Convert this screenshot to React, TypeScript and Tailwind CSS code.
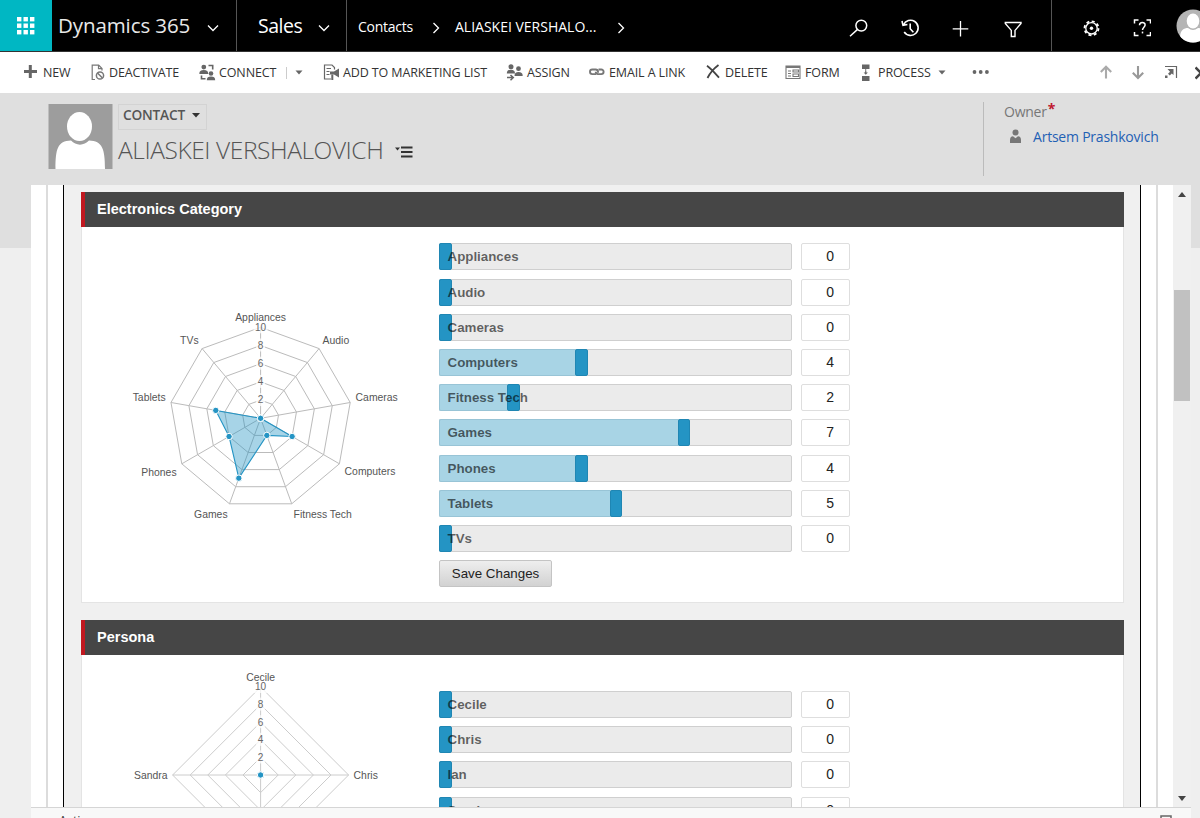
import type { ReactNode } from 'react';

type Entry = { name: string; value: number };
type Label = { text: string; x: number; y: number; anchor: 'start' | 'middle' | 'end' };

const electronics: Entry[] = [
  { name: 'Appliances', value: 0 },
  { name: 'Audio', value: 0 },
  { name: 'Cameras', value: 0 },
  { name: 'Computers', value: 4 },
  { name: 'Fitness Tech', value: 2 },
  { name: 'Games', value: 7 },
  { name: 'Phones', value: 4 },
  { name: 'Tablets', value: 5 },
  { name: 'TVs', value: 0 },
];

// label offsets are relative to the chart centre
const electronicsLabels: Label[] = [
  { text: 'Appliances', x: 0, y: -97, anchor: 'middle' },
  { text: 'Audio', x: 62, y: -74, anchor: 'start' },
  { text: 'Cameras', x: 95, y: -17, anchor: 'start' },
  { text: 'Computers', x: 84, y: 57, anchor: 'start' },
  { text: 'Fitness Tech', x: 33, y: 99.5, anchor: 'start' },
  { text: 'Games', x: -33, y: 99.5, anchor: 'end' },
  { text: 'Phones', x: -84, y: 58, anchor: 'end' },
  { text: 'Tablets', x: -95, y: -17, anchor: 'end' },
  { text: 'TVs', x: -62, y: -74, anchor: 'end' },
];

const persona: Entry[] = [
  { name: 'Cecile', value: 0 },
  { name: 'Chris', value: 0 },
  { name: 'Ian', value: 0 },
  { name: 'Sandra', value: 0 },
];

const personaLabels: Label[] = [
  { text: 'Cecile', x: 0, y: -94, anchor: 'middle' },
  { text: 'Chris', x: 93, y: 4, anchor: 'start' },
  { text: 'Sandra', x: -93, y: 4, anchor: 'end' },
];

const STEPS = [2, 4, 6, 8, 10];

type RadarProps = {
  data: Entry[];
  labels: Label[];
  radius: number;
  cy: number;
  line: string;
};

function Radar({ data, labels, radius, cy, line }: RadarProps) {
  const cx = 178.6;
  const point = (i: number, value: number) => {
    const angle = (Math.PI * 2 * i) / data.length;
    const r = (radius * value) / 10;
    return [cx + Math.sin(angle) * r, cy - Math.cos(angle) * r];
  };
  const ring = (value: number) => data.map((_, i) => point(i, value).join(',')).join(' ');

  return (
    <svg width="357" height="374" className="shrink-0 font-['Liberation_Sans',sans-serif]">
      <g fill="none" stroke={line} strokeWidth="1">
        {STEPS.map((s) => (
          <polygon key={s} points={ring(s)} />
        ))}
        {data.map((d, i) => {
          const [x, y] = point(i, 10);
          return <line key={d.name} x1={cx} y1={cy} x2={x} y2={y} />;
        })}
      </g>
      {STEPS.map((s) => {
        const y = cy - (radius * s) / 10;
        const w = s === 10 ? 14 : 9;
        return (
          <g key={s}>
            <rect x={cx - w / 2} y={y - 7} width={w} height="13" fill="#fff" fillOpacity="0.75" />
            <text x={cx} y={y + 3.3} textAnchor="middle" fontSize="10" fill="#666">
              {s}
            </text>
          </g>
        );
      })}
      {labels.map((l) => (
        <text
          key={l.text}
          x={cx + l.x}
          y={cy + l.y}
          textAnchor={l.anchor}
          fontSize="10.4"
          fill="#555"
        >
          {l.text}
        </text>
      ))}
      <polygon
        points={data.map((d, i) => point(i, d.value).join(',')).join(' ')}
        fill="#2494c4"
        fillOpacity="0.4"
        stroke="#2494c4"
        strokeWidth="1.1"
      />
      {data.map((d, i) => {
        const [x, y] = point(i, d.value);
        return <circle key={d.name} cx={x} cy={y} r="3.2" fill="#2494c4" stroke="#fff" strokeWidth="1" />;
      })}
    </svg>
  );
}

function SliderRow({ name, value }: Entry) {
  const offset = (value / 10) * 341;
  return (
    <div className="flex h-[27px] gap-[9px]">
      <div className="relative w-[353px] rounded-xs border border-[#cfcfcf] bg-[#ebebeb]">
        <div
          className="absolute -top-px -bottom-px -left-px rounded-l-xs border border-r-0 border-[#98c4d6] bg-[#a8d4e5]"
          style={{ width: offset + 2 }}
        />
        <div
          className="absolute -top-px -bottom-px w-[12.5px] rounded-xs border border-[#1f86b3] bg-[#2494c4]"
          style={{ left: offset - 1 }}
        />
        <span className="absolute top-0 left-[7.5px] text-[13.33px] leading-[25px] font-bold text-black/60">
          {name}
        </span>
      </div>
      <div className="w-[49px] rounded-xs border border-[#dedede] bg-white pr-[15px] text-right text-sm leading-[25px] text-[#222]">
        {value}
      </div>
    </div>
  );
}

function Section({ title, children }: { title: string; children: ReactNode }) {
  return (
    <section className="font-['Liberation_Sans',Arial,sans-serif]">
      <h2 className="h-[35px] border-l-4 border-[#c01820] bg-[#464646] pl-3 text-[14.5px] leading-[34px] font-bold text-white">
        {title}
      </h2>
      <div className="flex h-[376px] border border-t-0 border-[#e4e4e4] bg-white">{children}</div>
    </section>
  );
}

function Chevron({ className }: { className: string }) {
  return (
    <svg viewBox="0 0 12 12" className={className} fill="none" stroke="#fff" strokeWidth="1.3">
      <path d="M1 3.5l5 5 5-5" />
    </svg>
  );
}

function TopBar() {
  return (
    <header className="flex h-[52px] shrink-0 overflow-hidden border-b border-[#333] bg-black text-white">
      <div className="flex h-[52px] w-[52px] shrink-0 items-center justify-center bg-[#00b7c3]">
        <svg width="18" height="18" fill="#fff">
          {[0, 6.5, 13].map((y) =>
            [0, 6.5, 13].map((x) => <rect key={`${x}-${y}`} x={x} y={y} width="4.4" height="4.4" />),
          )}
        </svg>
      </div>
      <div className="flex w-[185px] shrink-0 border-r border-[#555] pl-1.5">
        <span className="w-[149px] text-[20.5px] leading-[51px] tracking-[-0.1px] text-[#e8e8e8]">
          Dynamics 365
        </span>
        <Chevron className="mt-[22px] h-3 w-3" />
      </div>
      <div className="flex w-[110px] shrink-0 border-r border-[#555] pl-[21px]">
        <span className="w-[60px] text-[19.5px] leading-[51px] tracking-[-0.5px]">Sales</span>
        <Chevron className="mt-[22px] h-3 w-3" />
      </div>
      <div className="flex flex-1 pl-[11px] text-[14px] leading-[54px]">
        <span className="w-[72px] tracking-[-0.25px]">Contacts</span>
        <Chevron className="mt-[22px] h-3 w-3 -rotate-90" />
        <span className="ml-[13px] w-[160px] tracking-[0px]">ALIASKEI VERSHALO...</span>
        <Chevron className="mt-[22px] h-3 w-3 -rotate-90" />
      </div>
      <div className="flex shrink-0 gap-[30px] pr-[27px]">
        <svg width="22" height="51" fill="none" stroke="#fff" strokeWidth="1.5">
          <circle cx="13.3" cy="25.6" r="5.4" />
          <path d="M9.3 29.6L2 36.3" />
        </svg>
        <svg width="22" height="51" fill="none" stroke="#fff" strokeWidth="1.6">
          <path d="M3.5 25A7.6 7.6 0 1 1 4.2 32M2 21l1 4.4 4.4-.9M10.2 23.5v5.3l3.2 3.4" />
        </svg>
        <svg width="20" height="51" fill="none" stroke="#fff" strokeWidth="1.3">
          <path d="M8.500 21v15.5M0.700 28.8h15.6" />
        </svg>
        <svg width="22" height="51" fill="none" stroke="#fff" strokeWidth="1.4">
          <path d="M3.300 22.500h15.700v1l-6 6.900v6.100H9.300v-6.100l-6-6.900z" />
        </svg>
      </div>
      <div className="flex w-[149px] shrink-0 border-l border-[#555] pl-[31px]">
        <svg width="18" height="51" fill="none" stroke="#fff" className="shrink-0">
          <circle cx="8.5" cy="28.3" r="7" strokeWidth="1.800" strokeDasharray="3 2.498" />
          <circle cx="8.5" cy="28.3" r="5.700" strokeWidth="1.300" />
          <circle cx="8.5" cy="28.3" r="1.7" fill="#fff" stroke="none" />
        </svg>
        <svg width="18" height="51" fill="none" stroke="#fff" strokeWidth="1.5" className="ml-8 shrink-0">
          <path d="M1.500 23.500v-3.500h4M13.500 20h4v3.500M17.500 32v3.500h-4M5.500 35.500h-4V32" />
          <path d="M6.500 25.300c0-3.800 5.800-3.600 5.600-.2 0 2.200-2.600 2.200-2.600 5" />
          <path d="M9.500 31.600v1.800" />
        </svg>
        <svg width="34" height="51" className="ml-[25px] shrink-0">
          <clipPath id="face">
            <circle cx="17" cy="26" r="16.5" />
          </clipPath>
          <g clipPath="url(#face)">
            <rect width="34" height="51" fill="#b5b5b5" />
            <ellipse cx="17" cy="21" rx="6.3" ry="7.5" fill="#fff" />
            <path d="M4 43v-5c0-8 4-10 8-10q5 4 10 0c5 0 8 3 8 10v5z" fill="#fff" />
          </g>
        </svg>
      </div>
    </header>
  );
}

function Caret() {
  return (
    <svg width="8" height="5" fill="#666">
      <path d="M0.5 0.5h7L4 4.5z" />
    </svg>
  );
}

function Command({ className, label, children }: { className: string; label: string; children: ReactNode }) {
  return (
    <div className={`flex shrink-0 items-center ${className}`}>
      {children}
      <span className="mt-px whitespace-nowrap">{label}</span>
    </div>
  );
}

function CommandBar() {
  return (
    <nav className="flex h-[41px] shrink-0 items-center bg-white pl-[23px] text-[12.5px] tracking-[-0.12px] text-[#333]">
      <Command className="w-[67px]" label="NEW">
        <svg width="20" height="18" fill="none" stroke="#666" strokeWidth="3">
          <path d="M7.3 1v13M1 7.500h13" />
        </svg>
      </Command>
      <Command className="w-[109px]" label="DEACTIVATE">
        <svg width="19" height="18" fill="none" stroke="#777" strokeWidth="1.2">
          <path d="M5 15.500H2.200V1.200h6.5l3.3 3.300v2M8.500 1.200v3.500H12" />
          <circle cx="10" cy="11.500" r="3.6" strokeWidth="1.5" />
          <path d="M7.500 9l5 5" strokeWidth="1.5" />
        </svg>
      </Command>
      <Command className="w-[87px]" label="CONNECT">
        <svg width="20" height="18" fill="#666">
          <circle cx="4.8" cy="3.1" r="2.4" />
          <path d="M0.3 10c0-3 1.5-4 4.5-4s4.4 1 4.4 4z" />
          <circle cx="12" cy="9.500" r="2.3" />
          <path d="M7.8 16.2c0-3 1.5-3.8 4.2-3.8s4.2.8 4.2 3.8z" />
          <path d="M9.5 1.500h4.2v4M2.5 11.500v3.2h4" fill="none" stroke="#666" strokeWidth="1.6" />
        </svg>
      </Command>
      <div className="flex h-3 w-[37px] shrink-0 items-center border-l border-[#ccc] pl-2">
        <Caret />
      </div>
      <Command className="w-[183px]" label="ADD TO MARKETING LIST">
        <svg width="20" height="18" fill="none" stroke="#666" strokeWidth="1.2">
          <path d="M8 15H1.500v-14H9l2.5 2.5v2M3.5 4.500h4.5M3.5 7.500h3M3.5 10.500h3" />
          <path d="M7 7.500h4l5-3v9l-5-3H7z" fill="#666" stroke="none" />
          <path d="M9.3 10.500v5.500" strokeWidth="2" />
        </svg>
      </Command>
      <Command className="w-[83px]" label="ASSIGN">
        <svg width="21" height="18" fill="#666">
          <circle cx="5" cy="2.700" r="2.5" />
          <path d="M0.8 9.500c0-2.600 1.600-3.700 4.200-3.700s4 1.100 4 3.700z" />
          <circle cx="12.5" cy="4.700" r="2.4" />
          <path d="M8.5 12c0-3 1.3-4 4-4s4.200 1 4.200 4z" />
          <path d="M1 13.600h6M4.500 11l2.800 2.600-2.800 2.600" fill="none" stroke="#666" strokeWidth="1.5" />
        </svg>
      </Command>
      <Command className="w-[116px]" label="EMAIL A LINK">
        <svg width="20" height="18" fill="none" stroke="#777" strokeWidth="1.9">
          <path d="M7 10.100H3.300a2.300 2.300 0 0 1 0-4.600h3.400a2.400 2.400 0 0 1 2.300 2.300v1" />
          <path d="M9.500 5.500h2.800a2.300 2.300 0 0 1 0 4.600H9a2.400 2.400 0 0 1-2.300-2.300" />
        </svg>
      </Command>
      <Command className="w-[80px]" label="DELETE">
        <svg width="20" height="18" fill="none" stroke="#444" strokeWidth="1.8">
          <path d="M2 1.700C6 4.500 10 9 14 13.700M13.500 1C9.500 4 5 9 2.500 14" />
        </svg>
      </Command>
      <Command className="w-[76px]" label="FORM">
        <svg width="20" height="18" fill="none" stroke="#777" strokeWidth="1.1">
          <path d="M1 2h14v12.500H1z" />
          <path d="M1 3h14" strokeWidth="2" />
          <path d="M3 7h3M3 9.500h3M3 12h3M8 6h5.500v2H8zM8 10h5.500v2.500H8z" />
        </svg>
      </Command>
      <Command className="w-[77px]" label="PROCESS">
        <svg width="17" height="18" fill="#666" className="shrink-0">
          <path d="M1 .5h7.500v4.500H1zM1 12h7.500v5H1zM4.300 5h.9v2.500h-.9zM4.100 7.200h1.300v1.300h1.500L4.750 10.800 2.600 8.500h1.500z" />
        </svg>
      </Command>
      <Caret />
      <svg width="20" height="6" fill="#666" className="mb-px ml-[25px]">
        <circle cx="3.500" cy="3" r="1.900" />
        <circle cx="9.700" cy="3" r="1.900" />
        <circle cx="15.900" cy="3" r="1.900" />
      </svg>
      <div className="ml-auto flex h-[18px] shrink-0 overflow-hidden">
        <svg width="32" height="18" fill="none" stroke="#aaa" strokeWidth="2.100">
          <path d="M7 14.500V3M1.800 8L7 2.800 12.200 8" />
        </svg>
        <svg width="32" height="18" fill="none" stroke="#999" strokeWidth="2.100">
          <path d="M7 2v12M1.800 8.700L7 13.900l5.200-5.200" />
        </svg>
        <svg width="32" height="18" fill="none" stroke="#666" strokeWidth="1.200">
          <path d="M2 2.500h11.500V14" />
          <path d="M4.500 5h6v6l-1.700-1.500-2 2-1.800-1.800 2-2z" fill="#666" stroke="none" />
          <path d="M2 11.500h2.500V14H2z" fill="#666" stroke="none" />
        </svg>
        <svg width="5" height="18" fill="none" stroke="#444" strokeWidth="2.500">
          <path d="M0.500 3.500L6 9 .5 14.500" />
        </svg>
      </div>
    </nav>
  );
}

function RecordHeader() {
  return (
    <div className="flex h-[92px] shrink-0 bg-[#dfdfdf] pl-12">
      <svg width="65" height="65" className="mt-[11px] shrink-0">
        <rect x="0.500" width="64" height="65" fill="#9d9d9d" />
        <path d="M7.500 65c0-20 2-28 15.500-28.500 5 5.500 13 5.500 18 0C54.500 37 57 45 57 65z" fill="#fff" />
        <ellipse cx="31.500" cy="22.500" rx="12.500" ry="14.500" fill="#fff" />
      </svg>
      <div className="ml-[5px] w-[865px] shrink-0">
        <div className="mt-[11px] flex h-[26px] w-[89px] items-center border border-[#d3d3d3] pb-[3px] pl-1 text-[13.700px] font-semibold tracking-[-0.200px] text-[#555]">
          <span className="w-[69px]">CONTACT</span>
          <svg width="8" height="5" fill="#333">
            <path d="M0 0h8L4 4.500z" />
          </svg>
        </div>
        <div className="mt-1 flex h-8 items-center">
          <h1 className="w-[277px] text-[24.500px] leading-8 font-light tracking-[-0.420px] whitespace-nowrap text-[#555]">
            ALIASKEI VERSHALOVICH
          </h1>
          <svg width="18" height="14" className="mt-[3px]">
            <path d="M0 2.500h5L2.500 5.500z" fill="#333" />
            <path d="M6 2.500h11.500M6 7h11.500M6 11.500h11.500" stroke="#333" strokeWidth="1.900" />
          </svg>
        </div>
      </div>
      <div className="mt-[9px] h-[74px] border-l border-[#bbb] pl-5 text-[14px]">
        <div className="flex h-[19px] text-[#777]">
          <span className="leading-[19px] tracking-[-0.250px]">Owner</span>
          <span className="ml-px text-[14px] leading-[14px] font-bold text-[#c01830]">*</span>
        </div>
        <div className="mt-1.5 flex items-center">
          <svg width="29" height="16" fill="#777">
            <circle cx="11.500" cy="3.500" r="3" />
            <path d="M6 14V11q0-3.500 3-3.800l2.500 2 2.500-2q3 .3 3 3.800v3z" />
          </svg>
          <span className="leading-[19px] tracking-[-0.220px] whitespace-nowrap text-[#1f61b5]">
            Artsem Prashkovich
          </span>
        </div>
      </div>
    </div>
  );
}

function Scrollbar() {
  return (
    <div className="flex w-[18px] shrink-0 flex-col items-center bg-[#f0f0f0]">
      <svg width="8" height="5" className="mt-[7px]" fill="#444">
        <path d="M0 5h8L4 0z" />
      </svg>
      <div className="mt-[92.500px] h-[111px] w-4 bg-[#c1c1c1]" />
      <svg width="8" height="5" className="mt-auto mb-1.5" fill="#444">
        <path d="M0 0h8L4 5z" />
      </svg>
    </div>
  );
}

export default function App() {
  return (
    <div className="flex h-[818px] w-[1200px] flex-col overflow-hidden bg-[#efefef] font-['Open_Sans','Segoe_UI',sans-serif]">
      <TopBar />
      <CommandBar />
      <RecordHeader />
      <main className="flex min-h-0 flex-1">
        <div className="h-[63px] w-[31px] shrink-0 bg-[#dfdfdf]" />
        <div className="flex w-[1160px] shrink-0 flex-col">
          <div className="flex h-[622px] shrink-0 overflow-hidden">
            <div className="flex flex-1 bg-white px-[15px]">
              <div className="flex flex-1 border-x-2 border-[#dcdcdc] px-[15px]">
                <div className="flex flex-1 flex-col gap-[17px] border-x border-black bg-[#f0f0f0] pt-[7px] pr-4 pl-[17px]">
                  <Section title="Electronics Category">
                    <Radar data={electronics} labels={electronicsLabels} radius={91} cy={191.3} line="#bbb" />
                    <div className="flex flex-col gap-[8.200px] pt-[16.400px]">
                      {electronics.map((e) => (
                        <SliderRow key={e.name} {...e} />
                      ))}
                      <button className="h-[27px] w-[113px] rounded-xs border border-[#c4c4c4] bg-linear-to-b from-[#eee] to-[#d2d2d2] text-[13.33px] text-[#222]">
                        Save Changes
                      </button>
                    </div>
                  </Section>
                  <Section title="Persona">
                    <Radar data={persona} labels={personaLabels} radius={88} cy={120} line="#ccc" />
                    <div className="flex flex-col gap-[8.200px] pt-9">
                      {persona.map((e) => (
                        <SliderRow key={e.name} {...e} />
                      ))}
                    </div>
                  </Section>
                </div>
              </div>
            </div>
            <Scrollbar />
          </div>
          <footer className="flex h-[11px] justify-between overflow-hidden border-t border-[#d5d5d5] bg-[#f8f8f8] pr-[19px] pl-7 text-[12.500px] text-[#333]">
            <span className="pt-1">Active</span>
            <svg width="12" height="12" className="mt-[7px] shrink-0" fill="none" stroke="#666" strokeWidth="1.500">
              <path d="M1 1h10v10H1z" />
            </svg>
          </footer>
        </div>
        <div className="h-[63px] w-[9px] shrink-0 bg-[#dfdfdf]" />
      </main>
    </div>
  );
}
